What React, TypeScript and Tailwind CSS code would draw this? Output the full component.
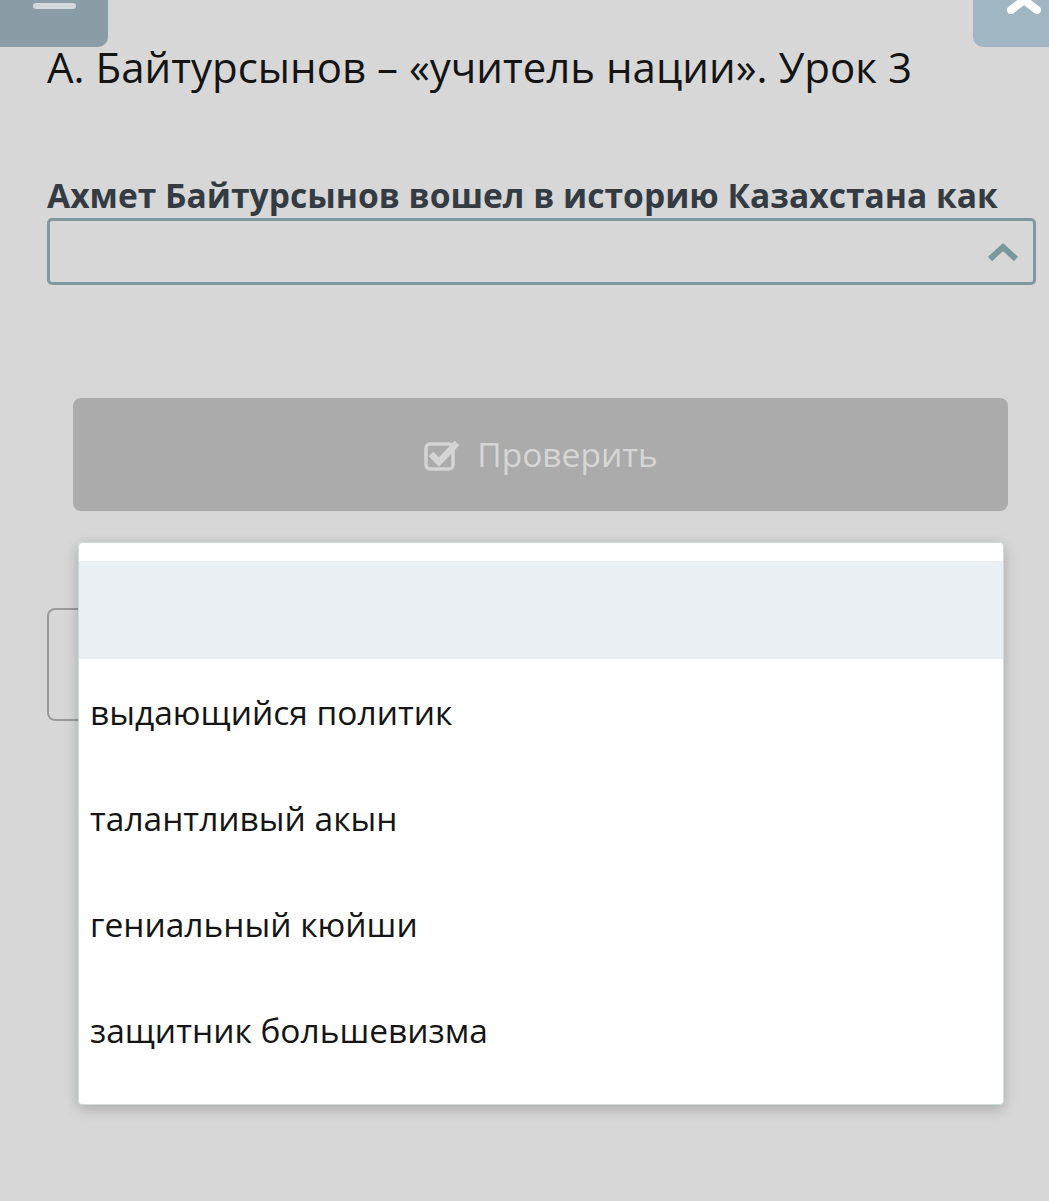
export default function App() {
  const options = [
    "выдающийся политик",
    "талантливый акын",
    "гениальный кюйши",
    "защитник большевизма",
  ];

  return (
    <div
      className="relative min-h-[1201px] w-full bg-[#d7d7d7] overflow-hidden"
      style={{ fontFamily: '"Open Sans", "Noto Sans", sans-serif' }}
    >
      {/* top toolbar */}
      <div className="flex justify-between h-[47px]">
        <div className="w-[108px] h-[47px] bg-[#8a9ca6] rounded-br-[10px] flex justify-center">
          <div className="mt-[3px] w-[43px] h-[6px] rounded-sm bg-[#d2d8dc]" />
        </div>
        <div className="w-[76px] h-[47px] bg-[#a0b6c2] rounded-bl-[10px] relative overflow-hidden">
          <svg className="absolute left-[34px] -top-[14px]" width="34" height="28" viewBox="0 0 34 28">
            <path d="M4 4 L30 24 M30 4 L4 24" stroke="#ffffff" strokeWidth="8" strokeLinecap="round" />
          </svg>
        </div>
      </div>

      <div className="px-[47px]">
        <h1 className="-mt-[8px] text-[42px] leading-[56px] text-[#141414] font-normal">
          А. Байтурсынов – «учитель нации». Урок 3
        </h1>

        <p className="mt-[78px] text-[33.6px] leading-[44px] font-bold text-[#343b42]">
          Ахмет Байтурсынов вошел в историю Казахстана как
        </p>

        <div className="mt-[1px] h-[67px] w-[989px] border-[3px] border-[#7f999e] rounded-[5px] flex items-center justify-end pr-[14px]">
          <svg width="32" height="20" viewBox="0 0 32 20">
            <path d="M3 17 L16 5 L29 17" stroke="#7a979c" strokeWidth="6" fill="none" strokeLinejoin="miter" />
          </svg>
        </div>

        <div className="mt-[113px] ml-[26px] w-[935px] h-[113px] rounded-[8px] bg-[#ababab] flex items-center justify-center gap-[16px]">
          <svg width="38" height="34" viewBox="0 0 38 34">
            <rect x="3" y="6" width="27" height="25" rx="4" stroke="#d4d4d4" strokeWidth="3.5" fill="none" />
            <path d="M8 16 L16 24 L34 5" stroke="#d4d4d4" strokeWidth="6.5" fill="none" />
          </svg>
          <span className="text-[33.5px] text-[#d6d6d6]">Проверить</span>
        </div>

        <div className="mt-[97px] w-[200px] h-[113px] border-2 border-[#9a9a9a] rounded-[8px]" />
      </div>

      {/* open dropdown list */}
      <div className="absolute left-[78px] top-[542px] w-[926px] h-[563px] bg-white rounded-[4px] border border-[#cfdcdc] shadow-[0_4px_14px_rgba(0,0,0,0.22)] pt-[18px]">
        <div className="h-[98px] bg-[#e9eff2]" />
        {options.map((o) => (
          <div key={o} className="h-[106px] flex items-center pl-[11px] text-[33.5px] text-[#151515]">
            {o}
          </div>
        ))}
      </div>
    </div>
  );
}
